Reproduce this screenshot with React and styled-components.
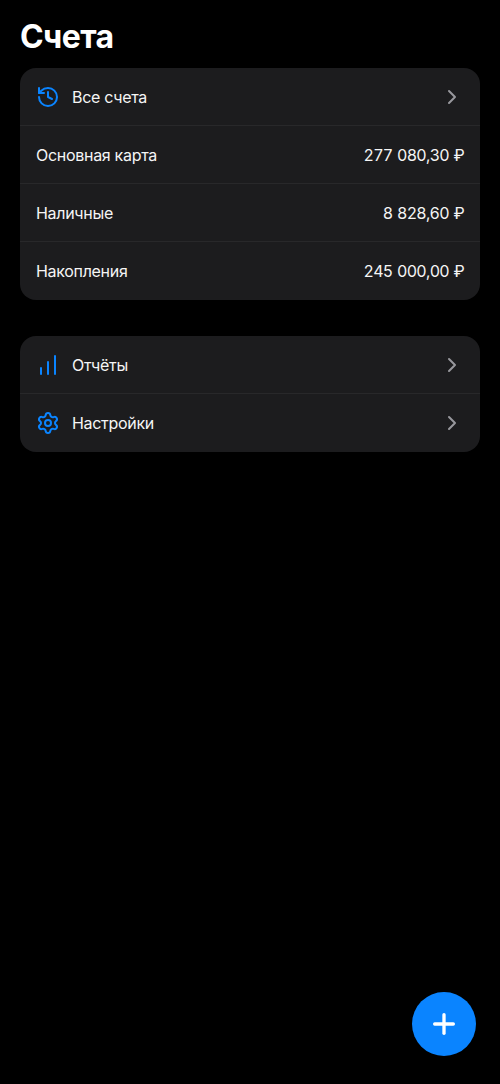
import React from 'react';
import styled, { createGlobalStyle } from 'styled-components';
import { History, ChartNoAxesColumnIncreasing, Settings, ChevronRight, Plus } from 'lucide-react';

const GlobalStyle = createGlobalStyle`
  * { box-sizing: border-box; }
  body {
    margin: 0;
    background: #000;
    color: #fff;
    font-family: Inter, sans-serif;
    font-size: 16px;
  }
`;
const Page = styled.main`
  min-height: 100vh;
  padding: 17px 20px 16px;
`;
const Title = styled.h1`
  margin: 0 0 11px;
  font-size: 32px;
  line-height: 40px;
  font-weight: 700;
  letter-spacing: -0.6px;
`;
const Group = styled.section`
  background: #1c1c1e;
  border-radius: 16px;
  overflow: hidden;
  & + & { margin-top: 36px; }
`;
const Row = styled.div`
  display: flex;
  align-items: center;
  gap: 12px;
  height: 58px;
  padding: 0 16px;
  border-bottom: 1px solid #28282a;
  &:last-child { border-bottom: 0; }
  svg { display: block; flex: none; }
`;
const Label = styled.span`
  flex: 1;
  line-height: 24px;
  letter-spacing: -0.3px;
  color: #f5f5f5;
`;
const Amount = styled.span`
  line-height: 24px;
  font-variant-numeric: tabular-nums;
  letter-spacing: -0.7px;
  word-spacing: 0.9px;
  color: #f5f5f5;
`;
const AddButton = styled.button`
  position: fixed;
  right: 24px;
  bottom: 28px;
  width: 64px;
  height: 64px;
  padding: 0;
  border: 0;
  border-radius: 50%;
  display: flex;
  align-items: center;
  justify-content: center;
  color: #fff;
  background: #0a84ff;
`;

const accounts = [
  ['Основная карта', '277 080,30 ₽'],
  ['Наличные', '8 828,60 ₽'],
  ['Накопления', '245 000,00 ₽'],
];

function LinkRow({ icon: Icon, children }) {
  return (
    <Row>
      <Icon size={24} color="#0a84ff" />
      <Label>{children}</Label>
      <ChevronRight size={24} color="#98989d" />
    </Row>
  );
}

export default function App() {
  return (
    <Page>
      <GlobalStyle />
      <Title>Счета</Title>
      <Group>
        <LinkRow icon={History}>Все счета</LinkRow>
        {accounts.map(([name, amount]) => (
          <Row key={name}>
            <Label>{name}</Label>
            <Amount>{amount}</Amount>
          </Row>
        ))}
      </Group>
      <Group>
        <LinkRow icon={ChartNoAxesColumnIncreasing}>Отчёты</LinkRow>
        <LinkRow icon={Settings}>Настройки</LinkRow>
      </Group>
      <AddButton aria-label="Добавить"><Plus size={32} strokeWidth={2.5} /></AddButton>
    </Page>
  );
}
